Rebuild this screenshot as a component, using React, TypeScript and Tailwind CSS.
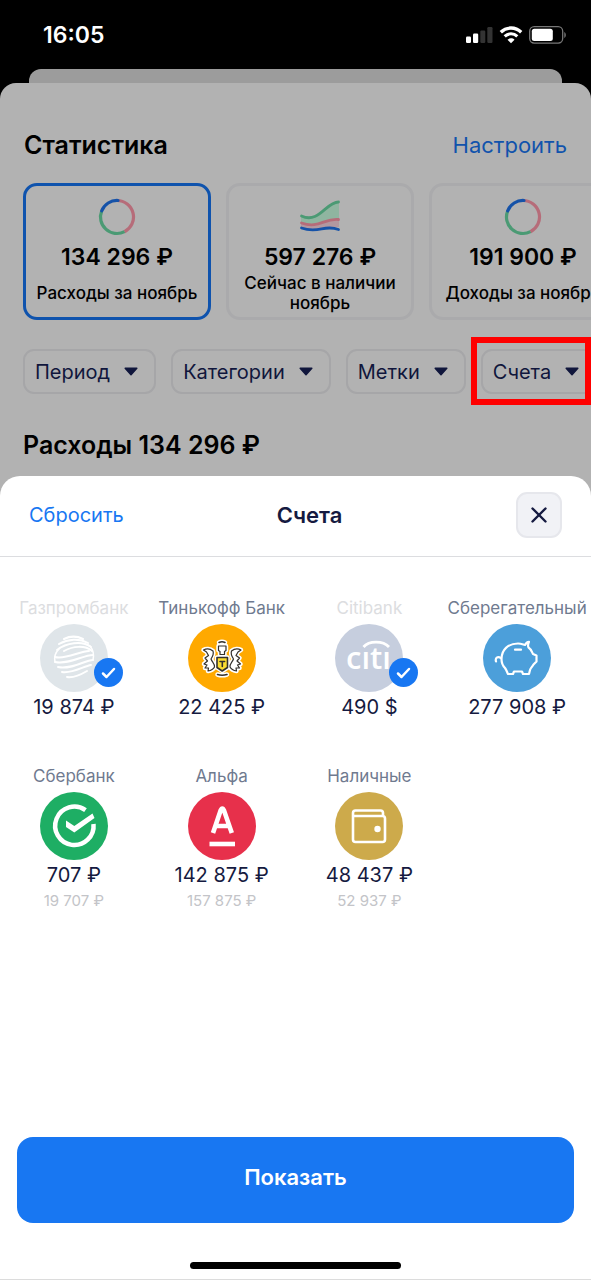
import { useState, type ReactNode } from 'react';

type Account = {
  id: string;
  name: string;
  balance: string;
  total?: string;
  logo: ReactNode;
};

function SignalIcon() {
  return (
    <svg width="28" height="18" viewBox="0 0 28 18" aria-hidden="true">
      <rect x="1" y="10.500" width="5" height="6.500" rx="1.200" fill="#fff" />
      <rect x="8" y="7.500" width="5.200" height="9.500" rx="1.200" fill="#fff" />
      <rect x="15.300" y="4.500" width="5" height="12.500" rx="1.200" fill="#333" />
      <rect x="22.300" y="1" width="5.200" height="16" rx="1.200" fill="#333" />
    </svg>
  );
}

function WifiIcon() {
  return (
    <svg width="24" height="18" viewBox="0 0 24 18" fill="none" stroke="#fff" aria-hidden="true">
      <path d="M1.800 6.200C7.500 .6 16.500 .6 22.200 6.200" strokeWidth="3.300" />
      <path d="M5.700 10.400C9.300 6.900 14.700 6.900 18.300 10.400" strokeWidth="3.100" />
      <path d="M12 17.200L8.500 13.700C10.400 11.900 13.600 11.900 15.500 13.700Z" fill="#fff" stroke="none" />
    </svg>
  );
}

function BatteryIcon() {
  return (
    <svg width="38" height="18" viewBox="0 0 38 18" aria-hidden="true">
      <rect x="0.700" y="0.700" width="33" height="16.400" rx="4.500" fill="none" stroke="#777" strokeWidth="1.300" />
      <rect x="2.800" y="2.800" width="21" height="12.200" rx="2.500" fill="#fff" />
      <path d="M35.300 6v6c2-.8 2-5.200 0-6Z" fill="#777" />
    </svg>
  );
}

function RingIcon() {
  return (
    <svg width="38" height="38" viewBox="0 0 38 38" fill="none" strokeWidth="3.200" aria-hidden="true">
      <path d="M19 2.500A16.500 16.500 0 0 1 26.500 33.700" stroke="#b66c79" />
      <path d="M26.500 33.700A16.500 16.500 0 0 1 3.700 12.800" stroke="#4b9a74" />
      <path d="M3.700 12.800A16.500 16.500 0 0 1 20 2.500" stroke="#1552a8" strokeLinecap="round" />
    </svg>
  );
}

function WavesIcon() {
  return (
    <svg width="42" height="38" viewBox="0 0 42 38" fill="none" strokeWidth="2.800" strokeLinecap="round" aria-hidden="true">
      <path d="M2 18C20 26 25 8 40 4v18C28 20 20 32 2 26Z" fill="#8fb5a0" />
      <path d="M2 25C20 32 25 20 40 22v7C28 28 20 35 2 30Z" fill="#b298a0" />
      <path d="M2.500 18C20 26 27 4 39.500 4" stroke="#4b9a74" />
      <path d="M2.500 25C20 31 25 20 39.500 21.500" stroke="#b66c79" />
      <path d="M2.500 30C20 36 25 26 39.500 31.500" stroke="#1552a8" />
    </svg>
  );
}

function GlobeLogo() {
  return (
    <svg viewBox="0 0 68 68" className="size-full" fill="none" stroke="#fff" strokeLinecap="round" aria-hidden="true">
      <g strokeWidth="2">
        <path d="M24 15C30 12 37 12 43 15" />
        <path d="M19 20C28 15 39 14 48 19" />
        <path d="M17 26C26 19 42 16 51 23" />
        <path d="M24 27C33 22 45 21 52 27" />
        <path d="M15 33C25 36 40 27 49 27" />
        <path d="M15 38C29 41 43 31 53 31" />
        <path d="M18 43C32 46 45 36 53 36" />
        <path d="M22 48C32 50 44 42 51 41" />
        <path d="M27 53C34 54 42 50 47 47" />
      </g>
      <path d="M19 25C15 29 14 34 15 38M50 22C54 27 54 32 53 36" strokeWidth="1.500" />
    </svg>
  );
}

function CrestLogo() {
  const wing =
    'M15.500 26C18 24.500 22 24.500 25 27C26 30 25 32 23 35C24 38 27 40 26.500 43C25.500 45 23 46.500 20 47L20.500 44L17 44L19 41L16 40L19.500 37L17 34L20.500 31.500L18.500 28Z';
  const head = 'M30.500 22H38V26.500L36.500 27.500V30.500H32V27.500L30.500 26.500Z';
  const shield = 'M29 33.500H39.500V43.500L34.200 47L29 43.500Z';
  return (
    <svg viewBox="0 0 68 68" className="size-full" strokeLinejoin="round" strokeLinecap="round" aria-hidden="true">
      <g fill="#fff" stroke="#fff" strokeWidth="4.500">
        <path d={wing} />
        <path d={wing} transform="matrix(-1 0 0 1 68.500 0)" />
        <path d={head} />
        <path d={shield} />
        <path d="M31 18.500Q34 17 37 18.500M29.500 50.500Q34 52 39 50.500" fill="none" />
      </g>
      <g fill="#fff" stroke="#33302c" strokeWidth="1.200">
        <path d={wing} />
        <path d={wing} transform="matrix(-1 0 0 1 68.500 0)" />
        <path d={head} />
        <path d={shield} fill="#fbdc2f" strokeWidth="1.600" />
        <path d="M31 18.500Q34 17 37 18.500M29.500 50.500Q34 52 39 50.500" fill="none" strokeWidth="1.600" />
        <path d="M32 37.500H36.600M34.300 37.500V42.500" strokeWidth="1.600" />
      </g>
    </svg>
  );
}

function CitiLogo() {
  return (
    <svg viewBox="0 0 68 68" className="size-full" role="img" aria-label="citi">
      <text x="33.500" y="45" textAnchor="middle" fontSize="31" fontWeight="600" fontFamily="'Open Sans', sans-serif" fill="#fff">
        cıtı
      </text>
      <path d="M28.500 23C34 16.500 48 16.500 54 23" fill="none" stroke="#fff" strokeWidth="2.800" />
    </svg>
  );
}

function PiggyLogo() {
  return (
    <svg viewBox="0 0 68 68" className="size-full" fill="none" stroke="#fff" strokeWidth="2.200" strokeLinecap="round" strokeLinejoin="round" aria-hidden="true">
      <path d="M18.500 35C18.500 26 25 19.500 35 19.500C38 19.500 40 20.500 42 21C43 19 44 18 46 17.800C45 20 44.500 21.500 45.500 23.500C48 25 49 28 50 30L53.500 31.500V37.500L50.500 40.500C49.500 42.500 47.500 44 47 46L46 50H40L39 47.500H31L30 50H25C24 48 23.500 46 22 44C19.500 41.500 18.500 38.500 18.500 35Z" />
      <path d="M18 34C14.500 32 12 34 13 37.500M32 25.700H38" />
    </svg>
  );
}

function CheckRingLogo() {
  return (
    <svg viewBox="0 0 68 68" className="size-full" aria-hidden="true">
      <path d="M45.500 18.200A19.200 19.200 0 1 0 53.500 32" fill="none" stroke="#fff" strokeWidth="4.500" />
      <path d="M26 28.500L34.300 34L52.500 21.500L54.500 26L34.300 40.500L26 35Z" fill="#fff" />
    </svg>
  );
}

function AlfaLogo() {
  return (
    <svg viewBox="0 0 68 68" className="size-full" fill="none" stroke="#fff" strokeWidth="4.600" strokeLinejoin="round" aria-hidden="true">
      <path d="M25 41L32.600 18.500Q34.300 14.500 36 18.500L43.800 41M28 34H41" />
      <path d="M21.500 52H47" />
    </svg>
  );
}

function WalletLogo() {
  return (
    <svg viewBox="0 0 68 68" className="size-full" fill="none" stroke="#fff" strokeWidth="2.600" strokeLinejoin="round" aria-hidden="true">
      <path d="M48 24V21Q48 18.500 45.500 18.500H20.500Q18 18.500 18 21V47.500Q18 50 20.500 50H47.500Q50 50 50 47.500V26.500Q50 24 47.500 24H18" />
      <circle cx="42.500" cy="37" r="3.200" fill="#fff" stroke="none" />
    </svg>
  );
}

const stats = [
  { value: '134 296 ₽', label: 'Расходы за ноябрь', icon: <RingIcon />, active: true },
  { value: '597 276 ₽', label: 'Сейчас в наличии ноябрь', icon: <WavesIcon />, active: false },
  { value: '191 900 ₽', label: 'Доходы за ноябрь', icon: <RingIcon />, active: false },
];

const filters = ['Период', 'Категории', 'Метки', 'Счета'];

const logoColors: Record<string, string> = {
  gazprom: 'bg-[#dfe5e9]',
  tinkoff: 'bg-[#ffa900]',
  citi: 'bg-[#c6cede]',
  savings: 'bg-[#4c9fda]',
  sber: 'bg-[#1eae64]',
  alfa: 'bg-[#e7304b]',
  cash: 'bg-[#cdaa4b]',
};

const accounts: Account[] = [
  { id: 'gazprom', name: 'Газпромбанк', balance: '19 874 ₽', logo: <GlobeLogo /> },
  { id: 'tinkoff', name: 'Тинькофф Банк', balance: '22 425 ₽', logo: <CrestLogo /> },
  { id: 'citi', name: 'Citibank', balance: '490 $', logo: <CitiLogo /> },
  { id: 'savings', name: 'Сберегательный', balance: '277 908 ₽', logo: <PiggyLogo /> },
  { id: 'sber', name: 'Сбербанк', balance: '707 ₽', total: '19 707 ₽', logo: <CheckRingLogo /> },
  { id: 'alfa', name: 'Альфа', balance: '142 875 ₽', total: '157 875 ₽', logo: <AlfaLogo /> },
  { id: 'cash', name: 'Наличные', balance: '48 437 ₽', total: '52 937 ₽', logo: <WalletLogo /> },
];

function StatusBar() {
  return (
    <div className="flex h-[69px] items-center justify-between pt-px pr-6 pl-[43px] text-white">
      <span className="text-[23px] leading-7 font-semibold">16:05</span>
      <div className="flex items-center gap-[6px]">
        <SignalIcon />
        <WifiIcon />
        <BatteryIcon />
      </div>
    </div>
  );
}

function Statistics() {
  return (
    <section className="pt-[46px]">
      <div className="flex items-center justify-between px-6">
        <h1 className="text-[25px] leading-8 font-semibold text-black">Статистика</h1>
        <a href="#settings" className="text-[22px] leading-8 text-[#1153ac]">Настроить</a>
      </div>

      <div className="mt-[22px] flex gap-[15px] overflow-hidden pl-[23px]">
        {stats.map((s) => (
          <button
            key={s.label}
            type="button"
            className={`flex h-[137px] w-[188px] shrink-0 flex-col items-center rounded-[14px] border-[3px] px-1 pt-3 text-black ${
              s.active ? 'border-[#0f53ad]' : 'border-[#aaaaac]'
            }`}
          >
            {s.icon}
            <span className="mt-[7px] text-[23px] leading-7 font-semibold">{s.value}</span>
            <span className="mt-px flex h-[42px] items-center text-[17px] leading-5 font-medium">{s.label}</span>
          </button>
        ))}
      </div>

      <div className="relative mt-[29px]">
        <div className="flex gap-[15px] overflow-hidden pl-[23px]">
          {filters.map((name) => (
            <button
              key={name}
              type="button"
              className="flex h-[45px] shrink-0 items-center gap-[14px] rounded-[11px] border-2 border-[#a6a6a8] pr-[16px] pl-[10px] text-[20px] whitespace-nowrap text-[#10163c]"
            >
              {name}
              <svg width="14" height="9" viewBox="0 0 14 9" aria-hidden="true">
                <path d="M1.200 1.200H12.800L7 7.800Z" fill="#10163c" stroke="#10163c" strokeWidth="1.500" strokeLinejoin="round" />
              </svg>
            </button>
          ))}
        </div>
        <div className="pointer-events-none absolute -top-3 right-0 h-[68px] w-[120px] border-[6px] border-[#fe0000]" />
      </div>

      <h2 className="mt-[35px] px-[23px] text-[25px] leading-8 font-semibold text-black">Расходы 134 296 ₽</h2>
    </section>
  );
}

function AccountTile({ account, checked, onToggle }: { account: Account; checked: boolean; onToggle: () => void }) {
  return (
    <label className="relative flex h-[168px] cursor-pointer flex-col items-center whitespace-nowrap">
      <input type="checkbox" className="sr-only" checked={checked} onChange={onToggle} />
      <span className={`text-[17px] leading-6 ${checked ? 'text-[#dcdde0]' : 'text-[#6f7a8f]'}`}>{account.name}</span>
      <span className="relative mt-1">
        <span className={`block size-[68px] rounded-full ${logoColors[account.id]}`}>{account.logo}</span>
        {checked && (
          <span className="absolute -right-[15px] bottom-[5px] flex size-[29px] items-center justify-center rounded-full bg-[#1877f2]">
            <svg width="15" height="12" viewBox="0 0 15 12" fill="none" stroke="#fff" strokeWidth="2.500" strokeLinecap="round" strokeLinejoin="round" aria-hidden="true">
              <path d="M2 6.500L5.500 10L13 2" />
            </svg>
          </span>
        )}
      </span>
      <span className="text-[20px] leading-[30px] text-[#151a40]">{account.balance}</span>
      {account.total && <span className="text-[15px] leading-[22px] text-[#c3c4c8]">{account.total}</span>}
    </label>
  );
}

export default function App() {
  const [selected, setSelected] = useState<string[]>(['gazprom', 'citi']);

  const toggle = (id: string) =>
    setSelected((prev) => (prev.includes(id) ? prev.filter((x) => x !== id) : [...prev, id]));

  return (
    <div className="flex min-h-screen flex-col overflow-hidden bg-black font-['Inter','Noto_Sans',sans-serif]">
      <StatusBar />
      <div className="mx-[29px] h-[14px] rounded-t-[12px] bg-[#9c9c9c]" />
      <main className="flex flex-1 flex-col rounded-t-[16px] bg-[#b2b2b2]">
        <Statistics />

        <section className="mt-[15px] flex flex-1 flex-col rounded-t-[20px] bg-white" aria-label="Счета">
          <header className="grid h-[81px] grid-cols-3 items-center border-b border-[#dcdde0] px-[29px] pb-[2px]">
            <button type="button" className="justify-self-start text-[20px] leading-7 text-[#1877f2]" onClick={() => setSelected([])}>
              Сбросить
            </button>
            <h2 className="justify-self-center pl-7 text-[22px] leading-7 font-semibold text-[#151a40]">Счета</h2>
            <button
              type="button"
              aria-label="Закрыть"
              className="flex size-[46px] items-center justify-center justify-self-end rounded-[11px] border-2 border-[#e6e7ec] bg-[#f1f2f6]"
            >
              <svg width="16" height="16" viewBox="0 0 16 16" stroke="#151a40" strokeWidth="2.400" strokeLinecap="round" aria-hidden="true">
                <path d="M1.500 1.500L14.500 14.500M14.500 1.500L1.500 14.500" />
              </svg>
            </button>
          </header>

          <div className="grid grid-cols-4 pt-[39px]">
            {accounts.map((a) => (
              <AccountTile key={a.id} account={a} checked={selected.includes(a.id)} onToggle={() => toggle(a.id)} />
            ))}
          </div>

          <footer className="mt-auto flex flex-col items-center border-b border-[#dcdcdc] px-[17px] pb-[10px]">
            <button type="button" className="h-[86px] w-full rounded-[16px] bg-[#1877f2] pb-[6px] text-[22px] font-semibold text-white">
              Показать
            </button>
            <div className="mt-[39px] h-[7px] w-[211px] rounded-full bg-black" />
          </footer>
        </section>
      </main>
    </div>
  );
}
